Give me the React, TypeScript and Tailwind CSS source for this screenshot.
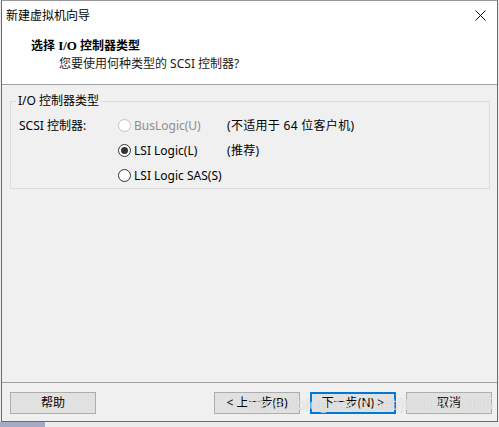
const font = { fontFamily: '"Noto Sans", "Noto Sans CJK SC", sans-serif' };

function Radio({ checked, disabled }: { checked?: boolean; disabled?: boolean }) {
  return (
    <span
      className={`inline-flex h-[13px] w-[13px] items-center justify-center rounded-full border bg-white ${
        disabled ? "border-[#c4c4c4]" : "border-[#333333]"
      }`}
    >
      {checked && <span className="h-[7px] w-[7px] rounded-full bg-[#333333]" />}
    </span>
  );
}

const options = [
  { label: "BusLogic(U)", note: "(不适用于 64 位客户机)", disabled: true },
  { label: "LSI Logic(L)", note: "(推荐)", checked: true },
  { label: "LSI Logic SAS(S)", note: "" }
];

function Button({ children, primary }: { children: React.ReactNode; primary?: boolean }) {
  return (
    <button
      className={`flex h-[22px] w-[86px] items-center justify-center bg-[#e1e1e1] text-[12px] text-black ${
        primary ? "border-2 border-[#0078d7]" : "border border-[#adadad]"
      }`}
    >
      {children}
    </button>
  );
}

export default function App() {
  return (
    <div className="relative h-[427px] w-[499px] overflow-hidden bg-[#ececec] text-[12px] text-black" style={font}>
      <div className="ml-px flex h-[422px] w-[497px] flex-col border border-t-[#9a9a9a] border-l-[#6b6b6b] border-r-[#6b6b6b] border-b-[#6b6b6b] bg-white">
        {/* title bar */}
        <div className="flex h-[29px] items-center justify-between pl-[4px] pr-[11px]">
          <span className="leading-[16px]">新建虚拟机向导</span>
          <svg width="11" height="11" viewBox="0 0 11 11">
            <path d="M0.5 0.5 L10.5 10.5 M10.5 0.5 L0.5 10.5" stroke="#111" strokeWidth="1" />
          </svg>
        </div>

        {/* header */}
        <div className="h-[55px] border-b border-[#a0a0a0] pl-[29px] pt-[8px]">
          <div className="font-bold leading-[16px]">
            选择 <span style={{ fontFamily: '"Liberation Serif", serif' }} className="text-[13px]">I/O</span> 控制器类型
          </div>
          <div className="pl-[28px] pt-[2px] leading-[16px] text-[#1a1a1a]">您要使用何种类型的 SCSI 控制器?</div>
        </div>

        {/* body */}
        <div className="flex flex-1 flex-col bg-[#f0f0f0] pl-[8px] pr-[7px] pt-[8px]">
          <fieldset className="border border-[#dcdcdc]">
            <legend className="ml-[5px] px-[2px] leading-[16px]">I/O 控制器类型</legend>
            <div className="pl-[8px] pt-[4px]">
              {options.map((o, i) => (
                <div key={o.label} className="flex h-[25px] items-center">
                  <span className="w-[99px]">{i === 0 ? "SCSI 控制器:" : ""}</span>
                  <span className="flex w-[109px] items-center gap-[3px]">
                    <Radio checked={o.checked} disabled={o.disabled} />
                    <span className={o.disabled ? "text-[#8d8d8d]" : ""}>{o.label}</span>
                  </span>
                  <span className="tracking-[0.3px]">{o.note}</span>
                </div>
              ))}
            </div>
          </fieldset>
        </div>

        {/* footer */}
        <div className="flex h-[39px] items-start border-t border-[#a0a0a0] bg-[#f0f0f0] pl-[8px] pr-[5px] pt-[9px]">
          <Button>帮助</Button>
          <div className="ml-auto flex gap-[10px]">
            <Button>&lt; 上一步(B)</Button>
            <Button primary>下一步(N) &gt;</Button>
            <Button>取消</Button>
          </div>
        </div>
      </div>
      <div className="flex h-[5px]">
        <div className="w-[45px] bg-[#a3abc6]" />
      </div>

      {/* watermark */}
      <div
        className="pointer-events-none absolute left-[246px] top-[395px] whitespace-nowrap text-[16.8px] leading-[20px] text-white/60"
        style={{ fontFamily: '"Liberation Sans", sans-serif', textShadow: "0 0 1px rgba(150,150,150,0.5)" }}
      >
        https://blog.csdn.net/jt781861965
      </div>
    </div>
  );
}
